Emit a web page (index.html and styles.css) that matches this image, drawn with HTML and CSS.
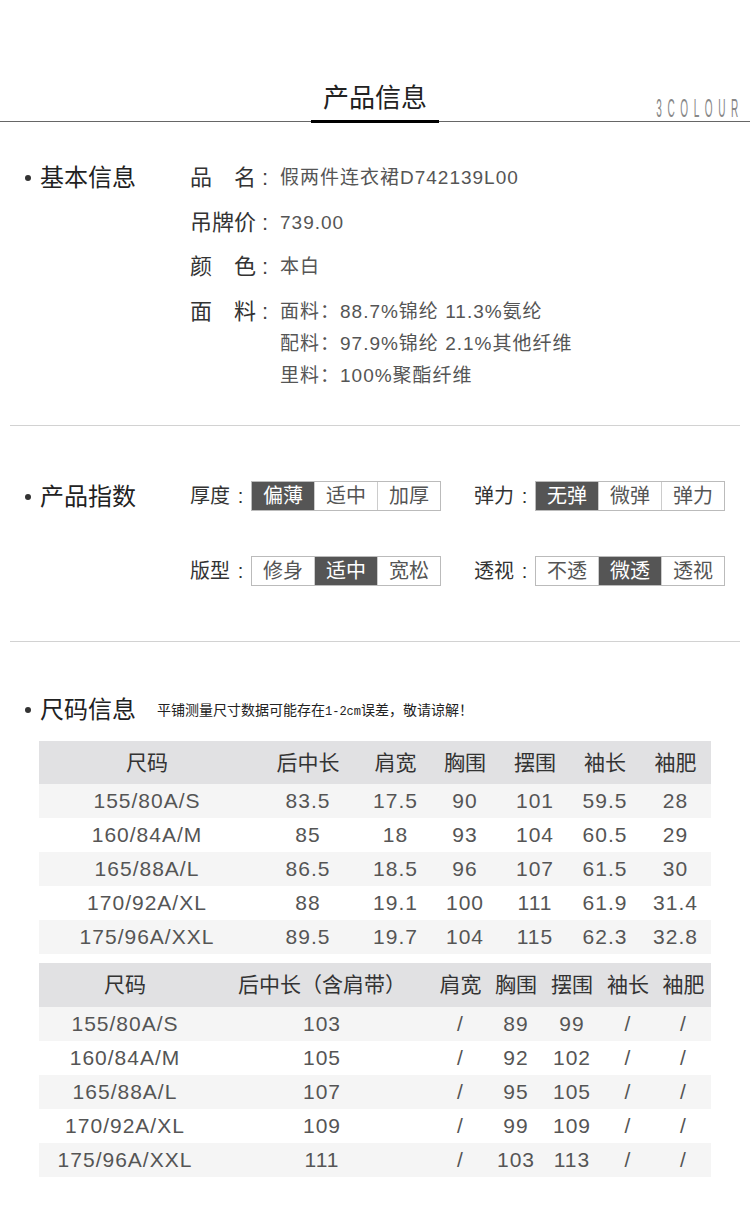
FILE: index.html
```html
<!DOCTYPE html>
<html lang="zh-CN">
<head>
<meta charset="utf-8">
<title>产品信息</title>
<link rel="stylesheet" href="styles.css">
</head>
<body>
<div class="page">
  <header class="hd">
    <h1 class="hd-title">产品信息</h1>
    <div class="brand"><span>3COLOUR</span></div>
  </header>

  <section class="sec sec-basic">
    <h2 class="sec-title">基本信息</h2>
    <div class="info">
      <div class="info-row"><span class="lbl">品　名</span><span class="colon">:</span><span class="val">假两件连衣裙D742139L00</span></div>
      <div class="info-row"><span class="lbl">吊牌价</span><span class="colon">:</span><span class="val">739.00</span></div>
      <div class="info-row"><span class="lbl">颜　色</span><span class="colon">:</span><span class="val">本白</span></div>
      <div class="info-row"><span class="lbl">面　料</span><span class="colon">:</span>
        <div class="val val-lines">
          <span>面料：88.7%锦纶 11.3%氨纶</span>
          <span>配料：97.9%锦纶 2.1%其他纤维</span>
          <span>里料：100%聚酯纤维</span>
        </div>
      </div>
    </div>
  </section>

  <div class="sep"></div>

  <section class="sec sec-index">
    <h2 class="sec-title sec-title-idx">产品指数</h2>
    <div class="idx-grid">
      <div class="idx"><span class="idx-lbl">厚度<span class="idx-colon">:</span></span>
        <div class="opts"><span class="opt on">偏薄</span><span class="opt">适中</span><span class="opt">加厚</span></div></div>
      <div class="idx"><span class="idx-lbl">弹力<span class="idx-colon">:</span></span>
        <div class="opts"><span class="opt on">无弹</span><span class="opt">微弹</span><span class="opt">弹力</span></div></div>
      <div class="idx"><span class="idx-lbl">版型<span class="idx-colon">:</span></span>
        <div class="opts"><span class="opt">修身</span><span class="opt on">适中</span><span class="opt">宽松</span></div></div>
      <div class="idx"><span class="idx-lbl">透视<span class="idx-colon">:</span></span>
        <div class="opts"><span class="opt">不透</span><span class="opt on">微透</span><span class="opt">透视</span></div></div>
    </div>
  </section>

  <div class="sep"></div>

  <section class="sec-size">
    <div class="size-head">
      <h2 class="sec-title sec-title-auto">尺码信息</h2>
      <p class="note">平铺测量尺寸数据可能存在<span class="mono">1-2cm</span>误差，敬请谅解！</p>
    </div>

    <table class="size-table t1">
      <colgroup><col class="c1"><col class="c2"><col class="c3"><col class="c4"><col class="c5"><col class="c6"><col class="c7"></colgroup>
      <thead><tr><th>尺码</th><th>后中长</th><th>肩宽</th><th>胸围</th><th>摆围</th><th>袖长</th><th>袖肥</th></tr></thead>
      <tbody>
        <tr><td>155/80A/S</td><td>83.5</td><td>17.5</td><td>90</td><td>101</td><td>59.5</td><td>28</td></tr>
        <tr><td>160/84A/M</td><td>85</td><td>18</td><td>93</td><td>104</td><td>60.5</td><td>29</td></tr>
        <tr><td>165/88A/L</td><td>86.5</td><td>18.5</td><td>96</td><td>107</td><td>61.5</td><td>30</td></tr>
        <tr><td>170/92A/XL</td><td>88</td><td>19.1</td><td>100</td><td>111</td><td>61.9</td><td>31.4</td></tr>
        <tr><td>175/96A/XXL</td><td>89.5</td><td>19.7</td><td>104</td><td>115</td><td>62.3</td><td>32.8</td></tr>
      </tbody>
    </table>

    <table class="size-table t2">
      <colgroup><col class="c1"><col class="c2"><col class="c3"><col class="c4"><col class="c5"><col class="c6"><col class="c7"></colgroup>
      <thead><tr><th>尺码</th><th>后中长（含肩带）</th><th>肩宽</th><th>胸围</th><th>摆围</th><th>袖长</th><th>袖肥</th></tr></thead>
      <tbody>
        <tr><td>155/80A/S</td><td>103</td><td>/</td><td>89</td><td>99</td><td>/</td><td>/</td></tr>
        <tr><td>160/84A/M</td><td>105</td><td>/</td><td>92</td><td>102</td><td>/</td><td>/</td></tr>
        <tr><td>165/88A/L</td><td>107</td><td>/</td><td>95</td><td>105</td><td>/</td><td>/</td></tr>
        <tr><td>170/92A/XL</td><td>109</td><td>/</td><td>99</td><td>109</td><td>/</td><td>/</td></tr>
        <tr><td>175/96A/XXL</td><td>111</td><td>/</td><td>103</td><td>113</td><td>/</td><td>/</td></tr>
      </tbody>
    </table>
  </section>
</div>
</body>
</html>
```

FILE: styles.css
```css
html, body {
  margin: 0;
  padding: 0;
  background: #fff;
}
body {
  font-family: "Liberation Sans", "Noto Sans CJK SC", sans-serif;
  color: #333;
}
.page {
  width: 750px;
}

/* header */
.hd {
  display: grid;
  grid-template-columns: 1fr auto 1fr;
  align-items: end;
  height: 121px;
  border-bottom: 1px solid #666;
}
.hd-title {
  grid-column: 2;
  margin: 0 0 -2px;
  width: 128px;
  text-align: center;
  font-size: 26px;
  font-weight: normal;
  line-height: 36px;
  padding-bottom: 4px;
  border-bottom: 3px solid #000;
  color: #222;
}
.brand {
  grid-column: 3;
  justify-self: end;
  padding: 0 6px 0 0;
  line-height: 18px;
}
.brand span {
  display: inline-block;
  font-size: 25px;
  line-height: 18px;
  letter-spacing: 14px;
  color: #888;
  transform: scaleX(0.4);
  transform-origin: right bottom;
}

/* sections */
.sec {
  display: flex;
  padding-left: 25px;
}
.sec-basic {
  padding-top: 40px;
  padding-bottom: 33px;
}
.sec-index {
  padding-top: 55px;
  padding-bottom: 55px;
}
.sec-title {
  flex: none;
  width: 165px;
  margin: 0;
  display: flex;
  align-items: center;
  font-size: 24px;
  font-weight: normal;
  line-height: 32px;
  height: 32px;
  color: #222;
}
.sec-title::before {
  content: "";
  width: 6px;
  height: 6px;
  border-radius: 50%;
  background: #333;
  margin-right: 9px;
  flex: none;
}
.sec-title-idx {
  height: 32px;
  line-height: 32px;
}
.sec-title-auto {
  width: auto;
}

.sep {
  height: 0;
  margin: 0 10px;
  border-top: 1px solid #d2d2d2;
}

/* basic info */
.info {
  display: flex;
  flex-direction: column;
  gap: 12.5px;
}
.info-row {
  display: flex;
  line-height: 32px;
}
.lbl {
  width: 66px;
  flex: none;
  font-size: 22px;
  color: #333;
}
.colon {
  width: 18px;
  padding-left: 6px;
  flex: none;
  font-size: 22px;
  color: #444;
}
.val {
  font-size: 19px;
  letter-spacing: 1px;
  color: #555;
}
.val-lines {
  display: flex;
  flex-direction: column;
}

/* product index */
.idx-grid {
  display: grid;
  grid-template-columns: 250px 251px;
  column-gap: 34px;
  row-gap: 45px;
  align-self: flex-start;
}
.idx {
  display: flex;
  align-items: center;
}
.idx-lbl {
  width: 61px;
  flex: none;
  font-size: 20px;
  line-height: 30px;
  color: #333;
}
.idx-colon {
  display: inline-block;
  width: 21px;
  text-align: center;
}
.opts {
  display: flex;
  border: 1px solid #bbb;
}
.opt {
  width: 62px;
  height: 28px;
  line-height: 28px;
  text-align: center;
  font-size: 20px;
  color: #555;
}
.opt + .opt {
  border-left: 1px solid #ccc;
}
.opt.on {
  background: #555;
  color: #fff;
}

/* size info */
.sec-size {
  padding-top: 52px;
  padding-bottom: 40px;
}
.size-head {
  display: flex;
  align-items: center;
  padding-left: 25px;
  margin-bottom: 15px;
}
.note {
  margin: 2px 0 0 21px;
  font-size: 14px;
  line-height: 20px;
  color: #222;
}
.mono {
  font-family: "Liberation Mono", monospace;
  font-size: 12px;
}
.size-table {
  margin-left: 39px;
  width: 672px;
  border-collapse: collapse;
  table-layout: fixed;
}
.t2 {
  margin-top: 9px;
}
.size-table th {
  padding: 0;
  height: 43px;
  background: #e1e1e3;
  font-size: 21px;
  font-weight: normal;
  color: #333;
  line-height: 1;
  text-align: center;
}
.t2 th {
  height: 44px;
}
.size-table td {
  padding: 0;
  height: 34px;
  font-size: 21px;
  letter-spacing: 1px;
  line-height: 1;
  color: #555;
  text-align: center;
}
.size-table tbody tr:nth-child(odd) td {
  background: #f5f5f5;
}
.t1 .c1 { width: 216px; }
.t1 .c2 { width: 106px; }
.t1 .c3 { width: 69px; }
.t1 .c4 { width: 70px; }
.t1 .c5 { width: 70px; }
.t1 .c6 { width: 70px; }
.t1 .c7 { width: 71px; }
.t2 .c1 { width: 172px; }
.t2 .c2 { width: 222px; }
.t2 .c3 { width: 55px; }
.t2 .c4 { width: 56px; }
.t2 .c5 { width: 56px; }
.t2 .c6 { width: 56px; }
.t2 .c7 { width: 55px; }
```
